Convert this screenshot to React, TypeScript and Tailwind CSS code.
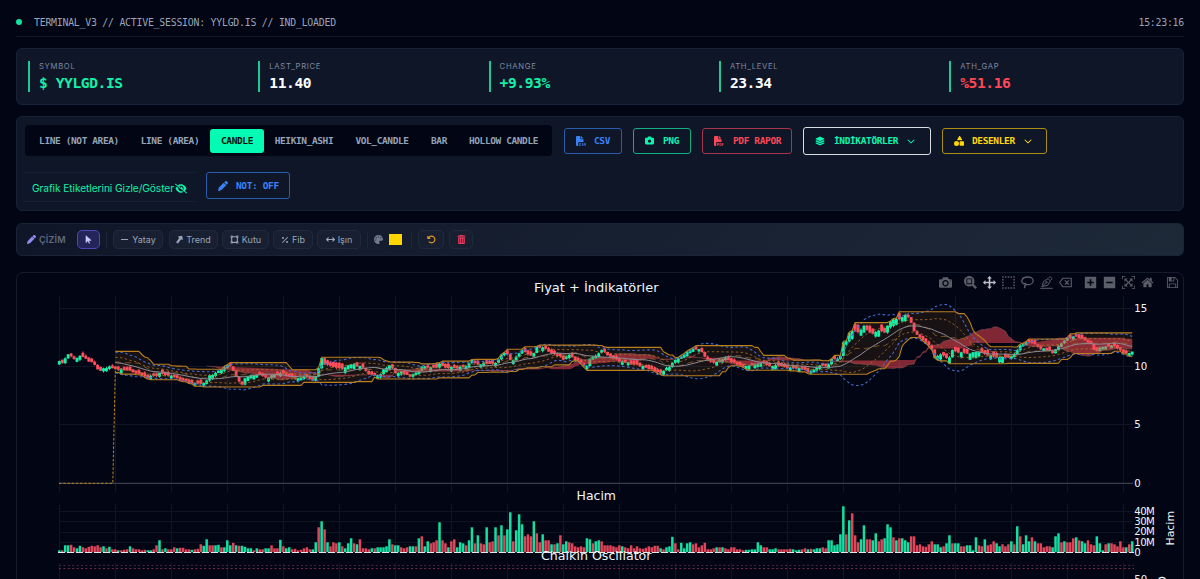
import React from "react";
import {
  FaFileCsv, FaCamera, FaFilePdf, FaLayerGroup, FaShapes, FaChevronDown, FaEyeSlash, FaPen,
  FaArrowPointer, FaMinus, FaUpLong, FaVectorSquare, FaPercent, FaArrowsLeftRight, FaPalette,
  FaRotateLeft, FaTrashCan,
} from "react-icons/fa6";

const X0 = 59.3;
const STEP = 2.9475;
const COUNT = 365;

/* Closing prices, as [x, y] knots in chart pixels */
const knots: number[][] = [
  [59.3,362],[64,362.5],[66,357],[68.3,354],[71,356.5],[74,359],[80,356.5],[85,358],[88.3,360.5],[91.7,361.5],[95,366],[100,370.5],[105,367.5],[110,366.5],[115,369.3],[121.7,369.3],[130,371.3],[138,374.5],[146.7,377.3],[151.7,374.7],[155,377.3],[160,373.3],[166.7,374.3],[173.3,376.3],[181.7,380],[188.3,382.7],[196.7,383.3],[201.7,384.7],[206,382.7],[208.3,376.7],[213.3,374],[220,370],[228.3,365],[231.7,368],[235,375],[240,384],[242.7,384],[245,379.3],[253.3,375],[260,375],[266.7,378.3],[273.3,375],[276.7,376.7],[280,372.7],[286.7,376],[293.3,378.3],[300,378.3],[305,376.7],[313.3,381],[316,376],[318.3,370],[321.7,357],[325,365],[331.7,366],[336.7,367.3],[345,368.3],[351.7,364],[358,366],[361.7,367.3],[366.7,371.7],[373.3,376],[380,374],[385,368.3],[390,366],[393.3,370],[396.7,375],[400,370.7],[406.7,375],[411.7,376],[416.7,371.7],[421.7,367.3],[428.3,367.3],[435,368.3],[439.3,364],[443.3,366.7],[453.3,368.3],[461.7,367.3],[468.3,365],[471.7,360],[476.7,364],[486.7,363.3],[496.7,362.7],[501.7,353.3],[506.7,354],[511.7,361.7],[518.3,353.3],[521.7,350],[528.3,355],[533.3,354],[536.7,347.3],[545,348.3],[550,352.3],[556.7,355],[563.3,359.3],[568.3,353.3],[575,360],[581.7,363.3],[586.7,367.3],[588.5,358.3],[595,356],[601,350.7],[606.7,354],[613.3,358.3],[620,361.7],[630,363.3],[640,365.7],[650,369.3],[660,373.3],[665,369.3],[670,366],[673.3,360.7],[680,358.3],[686.7,351.7],[695,348.3],[701.7,351],[706,359.3],[713.3,363.3],[718.3,360],[725,358.3],[733.3,362.3],[743.3,366.7],[753.3,365],[761.7,362.7],[770,366],[780,366],[793.3,368],[801.7,368.7],[806.7,371.7],[813.3,369.3],[820,366],[828.3,366],[831.7,358.3],[840,357.7],[843.3,343.3],[846.7,341.7],[850,330],[858.3,332.7],[864.3,326],[868.3,331.7],[873.3,334],[877,330],[881.7,331.7],[886,333.3],[888.3,323],[893.3,320],[900,318.3],[906,315],[910,320],[915,333.3],[920,336.7],[926.7,343.3],[931.7,348.3],[935,360],[940,353.3],[948.3,360],[951.7,350],[960,352.7],[966.7,353.3],[976.7,351.7],[986.7,354],[993.3,357.3],[1001.7,356],[1010,357.3],[1016.7,351.7],[1020,345],[1026.7,341.7],[1033.3,342.7],[1040,348.3],[1046.7,349.3],[1053.3,352.7],[1058.3,345],[1066.7,338.3],[1075,336],[1083.3,340],[1091.7,344],[1095,353.3],[1098.3,348.3],[1105,346.7],[1111.7,345],[1118.3,349.3],[1125,353.3],[1130,354],[1133,350],
];

/* Volume bar heights in pixels; negative values are down days */
const volA = [2,-2,7,7,-7.5,-5,4,6.5,-5,-4,-5.5,-6.5,-6,-7,-5,6,-4,5.5,-3,-3,2,-2,-2.5,-3,6,-4,-3,-3,-2,-2.5,2,2,-3,-7,12,-3,4,-3,-3,-5,4,-4.5,-4.5,-3,-3,2.5,-3,-3.5,-8,6.5,13,-7,-7,7,7.5,-5,5,12,7,-9.5,7,-6.5,6.5,5.5,4,4,-2,4,-3,-3,4,4,-7,-4,-4,12.5,-6,4,5,-3,-3.5,-2,-2.5,-4,-5,-3,3,10,-25,31,-23,10,-6,-10,-9,10,-6,4,9,14,-9,8,-13,-4,-4,-3,4,-4,5,5,5,6,13,-8,7,7,-5,-4,-5,6,6,-6,14,-16,6,11,-9,-10,-12,30,-12,-9,5,-11,-13,5,10,9,-7,12,25,-9,17,-9,-8,25,-10,-11,25,-17,27,-17,23,40,-11,22,38,28,-16,-18,-16,31,-19,-10,18,-12,-12,8,-8,9,-17,8,11,-10,-9,-6,-5,-6,-5,14,13,-9,11,12,-11,-7,-7,-7,-6,-5];
const volB = [-7,6,-5,-4,-7,-4,-6,-4,-3.5,-4.5,-6,-5,-6.5,-6.5,4,-3,5,6,15.5,-9,-3,9.5,4,9,10,-8,-9,-5,-7,-9.5,-3,-3,-4,5,-5,5,-4,-3,-5,-5,-3,-3,-2,2.5,2.5,3,3,10,7,-5,-5,3,3,4,-3,-3,-3,-3,-3.5,3,2,2.5,-3,-4,3,-3.5,3,4,4,-5,-4,12,12,7,8,18,46,-18,32,-39,-17,-10,13,27,-13,-13,12,19,-11,-13,14,28,25,-15,12,-14,14,12,10,-16,-16,-7,-8,-6,-5.5,-8,-11,8,8,5,-6,9,17,-9,9,9,-6,-6,7,7,2,15,-7,-6,13,-7,-8,-11,9,6,-8,-6,-8,11,-8,26,-16,8,17,11,-15,11,-9,-9,-5,-6,-6,5,16,19,-10,11,-10,-10,-14,15,-12,11,9,-12,-8,-7,16,9,2,-8,9,-9,-8,-6,-11,-5,5,-8,11];

const xAt = (i: number) => X0 + i * STEP;

function closeAt(x: number) {
  for (let k = 1; k < knots.length; k++) {
    const [ax, ay] = knots[k - 1];
    const [bx, by] = knots[k];
    if (x <= bx) return ay + ((by - ay) * (x - ax)) / (bx - ax);
  }
  return knots[knots.length - 1][1];
}

const noise = (i: number) => {
  const v = Math.sin(i * 12.9898) * 43758.5453;
  return v - Math.floor(v);
};

/* Wider daily ranges during the rally and the sell-off that follows it */
const body = (x: number) => (x > 848 && x < 906 ? 6.5 : x > 932 && x < 1010 ? 5 : x > 318 && x < 362 ? 4.5 : 3.4);

const close = Array.from({ length: COUNT }, (_, i) => closeAt(xAt(i)) + (noise(i) - 0.5) * 2);
const open = close.map((c, i) => {
  const prev = i ? close[i - 1] : c + 1.5;
  const b = body(xAt(i));
  return Math.abs(prev - c) < b ? c + (prev >= c ? b : -b) * (0.65 + noise(i + 500) * 0.6) : prev;
});
const top = close.map((c, i) => Math.min(c, open[i]) - noise(i + 900) * 1.4);
const low = close.map((c, i) => Math.max(c, open[i]) + noise(i + 1300) * 1.4);

const span = (a: number[], i: number, n: number) => a.slice(Math.max(0, i - n + 1), i + 1);
const mid = (i: number, n: number) => (Math.min(...span(top, i, n)) + Math.max(...span(low, i, n))) / 2;

type Pt = [number, number];
const upper: Pt[] = [], lower: Pt[] = [], sma: Pt[] = [], bbU: Pt[] = [], bbL: Pt[] = [];
const kU: Pt[] = [], kL: Pt[] = [], dMid: Pt[] = [];
for (let i = 19; i < COUNT; i++) {
  const x = xAt(i);
  const w = span(close, i, 20);
  const m = w.reduce((s, v) => s + v, 0) / 20;
  const sd = Math.sqrt(w.reduce((s, v) => s + (v - m) ** 2, 0) / 20);
  const u = Math.min(...span(top, i, 20));
  const l = Math.max(...span(low, i, 20));
  upper.push([x, u]);
  lower.push([x, l]);
  sma.push([x, m]);
  bbU.push([x, m - 2 * sd]);
  bbL.push([x, m + 2 * sd]);
  kU.push([x, m - sd]);
  kL.push([x, m + sd]);
  dMid.push([x, (u + l) / 2]);
}
const spanA: Pt[] = [], spanB: Pt[] = [];
for (let i = 50; i < COUNT; i++) spanA.push([xAt(i), (mid(i - 25, 9) + mid(i - 25, 26)) / 2]);
for (let i = 76; i < COUNT; i++) spanB.push([xAt(i), mid(i - 25, 52)]);

const pts = (a: Pt[]) => a.map(([x, y]) => `${x.toFixed(1)},${y.toFixed(1)}`).join(" ");
const grid = Array.from({ length: 20 }, (_, i) => 59.5 + i * 56);

function PriceChart() {
  const t = { fontFamily: '"DejaVu Sans", Verdana, sans-serif', fill: "#f1f5f9" };
  const bars = [
    ...volA.slice(0, 190).map((v, i) => ({ v, x: xAt(i) })),
    ...volB.map((v, i) => ({ v, x: xAt(i + 190) })),
  ];
  return (
    <svg className="block" width="1166" height="306" viewBox="17 273 1166 306">
      {grid.map((x) => (
        <g key={x} stroke="#101624">
          <line x1={x} x2={x} y1="296" y2="492" />
          <line x1={x} x2={x} y1="504" y2="552" />
          <line x1={x} x2={x} y1="563" y2="579" />
        </g>
      ))}
      {[308.5, 366.5, 424.5].map((y) => <line key={y} x1="59" x2="1133" y1={y} y2={y} stroke="#0f1522" />)}
      {[511.5, 521.5, 532.5, 542.5].map((y) => <line key={y} x1="59" x2="1133" y1={y} y2={y} stroke="#0e1421" />)}
      <line x1="59" x2="1133" y1="483.3" y2="483.3" stroke="#3a3f4b" strokeWidth="1.2" />

      <polygon points={pts([...upper, ...[...lower].reverse()])} fill="#ffa02a" fillOpacity="0.09" />
      {close.map((c, i) => {
        const up = c < open[i];
        const col = up ? "#14f0a8" : "#ff4d5e";
        const x = xAt(i);
        return (
          <g key={i}>
            <line x1={x} x2={x} y1={top[i]} y2={low[i]} stroke={col} strokeWidth="1" />
            <rect x={x - 1.45} y={Math.min(c, open[i])} width="2.9" height={Math.abs(c - open[i])} fill={col} />
          </g>
        );
      })}
      <polygon points={pts([...spanA, ...[...spanB].reverse()])} fill="#ff4757" fillOpacity="0.5" />
      <g fill="none" strokeLinejoin="round">
        <polyline points={pts(spanA)} stroke="#8a5a55" strokeWidth="0.5" />
        <polyline points={pts(bbU)} stroke="#416cd0" strokeWidth="1.1" strokeDasharray="2.6 2.4" />
        <polyline points={pts(bbL)} stroke="#416cd0" strokeWidth="1.1" strokeDasharray="2.6 2.4" />
        <polyline points={pts(kU)} stroke="#a8752a" strokeWidth="0.8" strokeDasharray="2.4 2.4" />
        <polyline points={pts(kL)} stroke="#a8752a" strokeWidth="0.8" strokeDasharray="2.4 2.4" />
        <polyline points={pts(dMid)} stroke="#8f6626" strokeWidth="0.8" strokeDasharray="6 4" />
        <polyline points={pts(sma)} stroke="#8d8b95" strokeWidth="1" />
        <polyline points={pts(upper)} stroke="#b97f1f" strokeWidth="1.1" />
        <polyline points={pts(lower)} stroke="#b97f1f" strokeWidth="1.1" />
        <polyline points="59,483.3 112.8,483.3 115.3,370" stroke="#b98522" strokeDasharray="2.6 1.6" />
      </g>

      {bars.map(({ v, x }, i) => (
        <rect key={i} x={x - 1.25} y={552.3 - Math.abs(v)} width="2.5" height={Math.abs(v)} fill={v > 0 ? "#12e0a2" : "#e0455a"} />
      ))}
      <line x1="58" x2="1134" y1="552.5" y2="552.5" stroke="#e5e7eb" strokeDasharray="7 2" />
      <line x1="59" x2="1134" y1="565.4" y2="565.4" stroke="#5f2438" strokeDasharray="2 2.4" />
      <line x1="59" x2="1134" y1="568.6" y2="568.6" stroke="#7d2f4c" strokeDasharray="2 2.4" />

      <g style={t} fontSize="12.8">
        <text x="534" y="292.3" textLength="124.5" lengthAdjust="spacingAndGlyphs">Fiyat + İndikatörler</text>
        <text x="576.5" y="500.3" textLength="39.5" lengthAdjust="spacingAndGlyphs">Hacim</text>
        <text x="541" y="560.1" textLength="110.5" lengthAdjust="spacingAndGlyphs">Chaikin Oscillator</text>
      </g>
      <g style={t} fontSize="10.2">
        <text x="1134.3" y="312">15</text>
        <text x="1134.3" y="370.3">10</text>
        <text x="1134.3" y="428.3">5</text>
        <text x="1134.3" y="486.8">0</text>
        <text x="1134.3" y="514.8" textLength="20.5">40M</text>
        <text x="1134.3" y="525" textLength="20.5">30M</text>
        <text x="1134.3" y="535.4" textLength="20.5">20M</text>
        <text x="1134.3" y="545.8" textLength="20.5">10M</text>
        <text x="1134.3" y="556">0</text>
        <text x="1134.3" y="582.8">50</text>
      </g>
      <g style={t} fontSize="11.2">
        <text transform="translate(1174 545.5) rotate(-90)" textLength="34.5" lengthAdjust="spacingAndGlyphs">Hacim</text>
        <text transform="translate(1166 585) rotate(-90)">O</text>
      </g>
    </svg>
  );
}

function Glyph({ d, w = 1000 }: { d: string; w?: number }) {
  return (
    <svg className="h-[13px] w-[13px]" viewBox={`0 0 ${w} 1000`} fill="currentColor">
      <path d={d} transform="matrix(1 0 0 -1 0 850)" />
    </svg>
  );
}

const CAMERA = "m500 450c-83 0-150-67-150-150 0-83 67-150 150-150 83 0 150 67 150 150 0 83-67 150-150 150z m400 150h-120c-16 0-34 13-39 29l-31 93c-6 15-23 28-40 28h-340c-16 0-34-13-39-28l-31-94c-6-15-23-28-40-28h-120c-55 0-100-45-100-100v-450c0-55 45-100 100-100h800c55 0 100 45 100 100v450c0 55-45 100-100 100z m-400-550c-138 0-250 112-250 250 0 138 112 250 250 250 138 0 250-112 250-250 0-138-112-250-250-250z m365 380c-19 0-35 16-35 35 0 19 16 35 35 35 19 0 35-16 35-35 0-19-16-35-35-35z";
const ZOOM = "m1000-25l-250 251c40 63 63 138 63 218 0 224-182 406-407 406-224 0-406-182-406-406s183-406 407-406c80 0 155 22 218 62l250-250 125 125z m-812 250l0 438 437 0 0-438-437 0z m62 375l313 0 0-312-313 0 0 312z";
const PAN = "m1000 350l-187 188 0-125-250 0 0 250 125 0-188 187-187-187 125 0 0-250-250 0 0 125-188-188 186-187 0 125 252 0 0-250-125 0 187-188 188 188-125 0 0 250 250 0 0-126 187 188z";
const PLUS = "m1 787l0-875 875 0 0 875-875 0z m687-500l-187 0 0-187-125 0 0 187-188 0 0 125 188 0 0 187 125 0 0-187 187 0 0-125z";
const MINUS = "m0 788l0-876 875 0 0 876-875 0z m688-500l-500 0 0 125 500 0 0-125z";
const AUTO = "m250 850l-187 0-63 0 0-62 0-188 63 0 0 188 187 0 0 62z m688 0l-188 0 0-62 188 0 0-188 62 0 0 188 0 62-62 0z m-875-938l0 188-63 0 0-188 0-62 63 0 187 0 0 62-187 0z m875 188l0-188-188 0 0-62 188 0 62 0 0 62 0 188-62 0z m-125 188l-1 0-93-94-156 156 156 156 92-93 2 0 0 250-250 0 0-2 93-92-156-156-156 156 94 92 0 2-250 0 0-250 0 0 93 93 157-156-157-156-93 94 0 0 0-250 250 0 0 0-94 93 156 157 156-157-93-93 0 0 250 0 0 250z";
const HOME = "m786 296v-267q0-15-11-26t-25-10h-214v214h-143v-214h-214q-15 0-25 10t-11 26v267q0 1 0 2t0 2l321 264 321-264q1-1 1-4z m124 39l-34-41q-5-5-12-6h-2q-7 0-12 3l-386 322-386-322q-7-4-13-4-7 2-12 7l-35 41q-4 5-3 13t6 12l401 334q18 15 42 15t43-15l136-114v109q0 8 5 13t13 5h107q8 0 13-5t5-13v-227l122-102q5-5 6-12t-4-13z";
const DISK = "m214-7h429v214h-429v-214z m500 0h72v500q0 8-6 21t-11 20l-157 156q-5 6-19 12t-22 5v-232q0-22-15-38t-38-16h-322q-22 0-37 16t-16 38v232h-72v-714h72v232q0 22 16 38t37 16h465q22 0 38-16t15-38v-232z m-214 518v178q0 8-5 13t-13 5h-107q-7 0-13-5t-5-13v-178q0-8 5-13t13-5h107q7 0 13 5t5 13z m357-18v-518q0-22-15-38t-38-16h-750q-23 0-38 16t-16 38v750q0 22 16 38t38 16h517q23 0 50-12t42-26l156-157q16-15 27-42t11-49z";

function Modebar() {
  return (
    <div className="absolute right-[4px] top-[3px] flex gap-3 text-[#5b5e69]">
      <Glyph d={CAMERA} />
      <div className="flex gap-[6px]">
        <Glyph d={ZOOM} />
        <span className="text-[#bfc1c7]"><Glyph d={PAN} /></span>
        <svg className="h-[13px] w-[13px]" viewBox="0 0 13 13">
          <rect x="0.9" y="0.9" width="11.2" height="11.2" fill="none" stroke="currentColor" strokeWidth="1.5" strokeDasharray="1.5 1.3" strokeDashoffset="0.75" />
        </svg>
        <svg className="h-[13px] w-[13px]" viewBox="0 0 13 13" fill="none" stroke="currentColor" strokeWidth="1.3">
          <path d="M3.2 8.2C1.2 7.4.6 5.9.9 4.5 1.4 2.2 4 1 6.8 1c3 0 5.4 1.5 5.4 3.7 0 2.3-2.5 4-5.4 4-1 0-1.7-.2-2.3-.5M2.5 8.3c.2-1.2 2-1.2 2.4-.2.3.9-.8 1.5-1.6 1.1M3.3 9.2c.9.9.7 2-.1 3" />
        </svg>
        <svg className="h-[13px] w-[13px]" viewBox="0 0 13 13" fill="none" stroke="currentColor" strokeWidth="1">
          <path d="M.3 12.3h12.4M2 10.6 3.5 5.5 8 2.6l2.3 2.3-2.6 4.4L2 10.6l4-4M8.3 2.3 10 .6l2.2 2.2-1.6 1.7" />
          <circle cx="6.5" cy="6.2" r=".8" />
        </svg>
        <svg className="h-[13px] w-[13px]" viewBox="0 0 13 13" fill="none" stroke="currentColor" strokeWidth="1.1">
          <path d="M3.8 2.3h8.5v8.4H3.8L.6 6.5zM5.8 4.4l4.2 4.2M10 4.4 5.8 8.6" />
        </svg>
      </div>
      <div className="flex gap-[6px]">
        <Glyph d={PLUS} w={875} />
        <Glyph d={MINUS} w={875} />
        <Glyph d={AUTO} />
        <Glyph d={HOME} w={928.6} />
      </div>
      <Glyph d={DISK} w={857} />
    </div>
  );
}

const stats = [
  { label: "SYMBOL", value: "$ YYLGD.IS", color: "text-[#14f0a8]" },
  { label: "LAST_PRICE", value: "11.40", color: "text-white" },
  { label: "CHANGE", value: "+9.93%", color: "text-[#14f0a8]" },
  { label: "ATH_LEVEL", value: "23.34", color: "text-white" },
  { label: "ATH_GAP", value: "%51.16", color: "text-[#ff4757]" },
];

const tabs = [
  { name: "LINE (NOT AREA)", w: "w-[102px]" },
  { name: "LINE (AREA)", w: "w-[80px]" },
  { name: "CANDLE", w: "w-[54px]", active: true },
  { name: "HEIKIN_ASHI", w: "w-[80px]" },
  { name: "VOL_CANDLE", w: "w-[76px]" },
  { name: "BAR", w: "w-[38px]" },
  { name: "HOLLOW CANDLE", w: "w-[91px]" },
];

const MONO = "font-['DejaVu_Sans_Mono',monospace]";
const BTN = "flex items-center rounded-[3px] border text-[9.5px] font-bold tracking-[-0.38px] whitespace-pre leading-none pl-[11px]";
const TOOL = "flex h-[19px] items-center justify-center gap-[3px] rounded-[5px] border border-[#212a3d] bg-[#171f31] text-[9px] leading-none text-[#9aa5b8] whitespace-nowrap";
const PANEL = "rounded-[6px] border border-[#182236] bg-[#0e1628]";

function Label({ children }: { children: React.ReactNode }) {
  return <span className="pt-px">{children}</span>;
}

export default function App() {
  return (
    <div className="h-[579px] w-[1200px] overflow-hidden bg-[#020513] px-4 font-['Inter',sans-serif]">
      <header className={`${MONO} flex h-[37px] items-center justify-between border-b border-[#121826] pt-[8px] text-[9.9px] tracking-[-0.25px] text-[#98a4b8]`}>
        <div className="flex items-center">
          <span className="h-[6px] w-[6px] rounded-full bg-[#10e5a0]" />
          <span className="ml-3 pt-[2px]">TERMINAL_V3 // ACTIVE_SESSION: YYLGD.IS // IND_LOADED</span>
        </div>
        <span className="pt-[2px]">15:23:16</span>
      </header>

      <section className={`${PANEL} mt-[11px] flex h-[57px] pl-[11px] pt-3`}>
        {stats.map((s) => (
          <div key={s.label} className="w-[230.3px] shrink-0">
            <div className="h-[31px] border-l-2 border-[#1fc997] pl-[9px]">
              <div className="pt-[1px] text-[7.7px] leading-[9px] tracking-[0.68px] text-[#7e8aa0]">{s.label}</div>
              <div className={`${MONO} ${s.color} mt-[3px] text-[14.6px] font-bold leading-[17px] tracking-[-0.42px]`}>{s.value}</div>
            </div>
          </div>
        ))}
      </section>

      <section className={`${PANEL} mt-[11px] h-[95px] pl-[7px] pt-[8px]`}>
        <div className={`${MONO} flex items-center`}>
          <div className="ml-[1px] flex h-[31px] w-[527px] items-center rounded-[4px] bg-[#020513] pl-[3px]">
            {tabs.map((t) => (
              <div
                key={t.name}
                className={`${t.w} flex h-6 items-center justify-center whitespace-nowrap rounded-[3px] pt-px text-[9.5px] font-bold tracking-[-0.4px] ${t.active ? "bg-[#04fbb4] text-[#03110f]" : "text-[#94a3b8]"}`}
              >
                {t.name}
              </div>
            ))}
          </div>
          <div className={`${BTN} ml-3 h-[26px] w-[58px] gap-[8px] border-[#2a5cae] text-[#3b82f6]`}><FaFileCsv className="h-[10px] w-[10px]" /><Label>CSV</Label></div>
          <div className={`${BTN} ml-[11px] h-[26px] w-[58px] gap-[9px] border-[#0fae85] text-[#0ff5b0]`}><FaCamera className="h-[9px] w-[9px]" /><Label>PNG</Label></div>
          <div className={`${BTN} ml-[11px] h-[26px] w-[90px] gap-[9px] border-[#a8344a] text-[#ff4757]`}><FaFilePdf className="h-[10px] w-[10px]" /><Label>PDF RAPOR</Label></div>
          <div className={`${BTN} ml-[11px] h-[28px] w-[128px] gap-[9px] border-[#d9dde4] text-[#0ff5b0]`}><FaLayerGroup className="h-[10px] w-[10px]" /><Label>İNDİKATÖRLER</Label><FaChevronDown className="h-[8px] w-[8px]" /></div>
          <div className={`${BTN} ml-[11px] h-[26px] w-[105px] gap-[8px] border-[#a98e14] text-[#ffd60a]`}><FaShapes className="h-[10px] w-[10px]" /><Label>DESENLER</Label><FaChevronDown className="ml-[1px] h-[8px] w-[8px]" /></div>
        </div>
        <div className="mt-4 flex items-start">
          <div className="flex h-[30px] w-[171px] items-center border-y border-[#172135] pl-2 pt-[3px] text-[#10f0a8]">
            <span className="w-[142.5px] whitespace-nowrap text-[10.2px] tracking-[-0.08px]">Grafik Etiketlerini Gizle/Göster</span>
            <FaEyeSlash className="mb-px h-[11px] w-[12px] shrink-0" />
          </div>
          <div className={`${BTN} ${MONO} ml-[11px] h-[27px] w-[84px] gap-[8px] border-[#2a5cae] text-[#3b82f6]`}><FaPen className="h-[10px] w-[10px]" /><Label>NOT: OFF</Label></div>
        </div>
      </section>

      <section className="mt-[12px] flex h-[33px] items-center rounded-[6px] border border-[#1a2437] bg-[linear-gradient(135deg,#0f1628,#1e2938)] pl-[10px]">
        <FaPen className="h-[9px] w-[9px] text-[#8f8df0]" />
        <span className="ml-[3px] w-[27px] text-[9px] font-semibold tracking-[0.2px] text-[#606b7f]">ÇİZİM</span>
        <div className="ml-[11px] flex h-[19px] w-[23px] items-center justify-center rounded-[5px] border border-[#4f46b8] bg-[#24245a] text-[#c7cbfa]"><FaArrowPointer className="h-[9px] w-[9px]" /></div>
        <span className="ml-[6px] h-[16px] w-px bg-[#1e2739]" />
        <div className={`${TOOL} ml-[6px] w-[50px]`}><FaMinus className="h-[9px] w-[9px]" />Yatay</div>
        <div className={`${TOOL} ml-[6px] w-[49px]`}><FaUpLong className="h-[9px] w-[7px] rotate-[35deg]" />Trend</div>
        <div className={`${TOOL} ml-[4px] w-[47px]`}><FaVectorSquare className="h-[9px] w-[9px]" />Kutu</div>
        <div className={`${TOOL} ml-[4px] w-[40px]`}><FaPercent className="h-[8px] w-[8px]" />Fib</div>
        <div className={`${TOOL} ml-[4px] w-[44px]`}><FaArrowsLeftRight className="h-[9px] w-[9px]" />Işın</div>
        <span className="ml-[6px] h-[16px] w-px bg-[#1e2739]" />
        <FaPalette className="ml-[6px] h-[9px] w-[9px] text-[#6f7a8e]" />
        <span className="ml-[6px] h-[11px] w-[13px] bg-[#ffd500]" />
        <span className="ml-[9px] h-[16px] w-px bg-[#1e2739]" />
        <div className={`${TOOL} ml-[6px] w-[26px] !text-[#e29a1c]`}><FaRotateLeft className="h-[9px] w-[9px]" /></div>
        <div className={`${TOOL} ml-[5px] w-[24px] !text-[#e03a5c]`}><FaTrashCan className="h-[9px] w-[9px]" /></div>
      </section>

      <section className="relative mt-4 h-[330px] rounded-[7px] border border-[#141b2b]">
        <PriceChart />
        <Modebar />
      </section>
    </div>
  );
}
